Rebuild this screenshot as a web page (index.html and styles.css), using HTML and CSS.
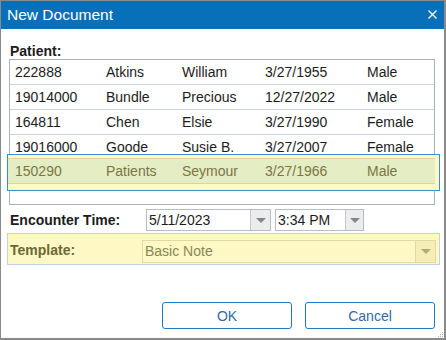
FILE: index.html
```html
<!DOCTYPE html>
<html lang="en">
<head>
  <meta charset="UTF-8" />
  <meta name="viewport" content="width=device-width, initial-scale=1.0" />
  <title>New Document</title>
  <link rel="stylesheet" href="styles.css">
</head>
<body>
  <div class="dialog">
    <div class="titlebar">
      <span class="title">New Document</span>
      <svg class="close" width="9" height="9" viewBox="0 0 9 9">
        <path d="M0.5 0.5 L8.5 8.5 M8.5 0.5 L0.5 8.5" stroke="#fff" stroke-width="1.3" fill="none" />
      </svg>
    </div>

    <div class="content">
      <div class="label patient-label">Patient:</div>
      <div class="patients">
        <div class="row"><span>222888</span><span>Atkins</span><span>William</span><span>3/27/1955</span><span>Male</span></div>
        <div class="row"><span>19014000</span><span>Bundle</span><span>Precious</span><span>12/27/2022</span><span>Male</span></div>
        <div class="row"><span>164811</span><span>Chen</span><span>Elsie</span><span>3/27/1990</span><span>Female</span></div>
        <div class="row"><span>19016000</span><span>Goode</span><span>Susie B.</span><span>3/27/2007</span><span>Female</span></div>
        <div class="spotlight">
          <div class="row selected"><span>150290</span><span>Patients</span><span>Seymour</span><span>3/27/1966</span><span>Male</span></div>
        </div>
      </div>

      <div class="field-row encounter">
        <div class="label">Encounter Time:</div>
        <div class="picker date">
          <span class="value">5/11/2023</span>
          <span class="arrow"><i></i></span>
        </div>
        <div class="picker time">
          <span class="value">3:34 PM</span>
          <span class="arrow"><i></i></span>
        </div>
      </div>

      <div class="field-row template">
        <div class="label">Template:</div>
        <div class="picker select">
          <span class="value">Basic Note</span>
          <span class="arrow"><i></i></span>
        </div>
      </div>

      <div class="actions">
        <button>OK</button>
        <button>Cancel</button>
      </div>
    </div>

    <svg class="grip" width="5" height="5" viewBox="0 0 5 5">
      <rect x="4" y="0" width="1" height="1" fill="#b5b5b5" />
      <rect x="2" y="2" width="1" height="1" fill="#b5b5b5" />
      <rect x="4" y="2" width="1" height="1" fill="#b5b5b5" />
      <rect x="0" y="4" width="1" height="1" fill="#b5b5b5" />
      <rect x="2" y="4" width="1" height="1" fill="#b5b5b5" />
      <rect x="4" y="4" width="1" height="1" fill="#b5b5b5" />
    </svg>
  </div>
</body>
</html>
```

FILE: styles.css
```css
* {
  box-sizing: border-box;
}
body {
  margin: 0;
  font-family: 'Liberation Sans', Arial, sans-serif;
  font-size: 14px;
  color: #1c1c1c;
  background: #fff;
}
.dialog {
  position: relative;
  width: 446px;
  height: 340px;
  border-style: solid;
  border-color: #8a8a8a;
  border-width: 1px 2px 2px 1px;
  background: #fff;
}
.titlebar {
  height: 28px;
  background: #0870b8;
  color: #fff;
  display: flex;
  align-items: center;
  justify-content: space-between;
  padding: 0 7px 0 6px;
}
.title {
  font-size: 15.5px;
  line-height: 28px;
}
.close {
  display: block;
  margin-top: -1px;
}
.content {
  padding: 15px 9px 0 8px;
}
.label {
  font-weight: bold;
  line-height: 15px;
  padding-left: 1px;
}
.patients {
  height: 146px;
  border: 1px solid #aab3c1;
}
.row {
  display: grid;
  grid-template-columns: 91px 76px 83px 102px 1fr;
  align-items: center;
  height: 25px;
  padding-left: 5px;
  border-bottom: 1px solid #cdd3db;
}
.spotlight {
  margin: -6px -6px -6px -3px;
  padding: 3px 4px 6px 0;
  background: #fdf8c4;
  border: 1px solid #3c8dd2;
}
.row.selected {
  height: 26px;
  padding-left: 7px;
  background: #e5edc4;
  color: #7a7543;
  border-top: 1px solid #ddd49c;
  border-bottom: 1px solid #ddd49c;
}
.field-row {
  display: grid;
  align-items: center;
}
.encounter {
  grid-template-columns: 133px 125px 89px;
  column-gap: 4px;
  margin-top: 4px;
}
.picker {
  display: flex;
  height: 22px;
  border: 1px solid #b7bdc7;
  background: #fff;
}
.picker .value {
  flex: 1;
  padding-left: 2px;
  line-height: 20px;
}
.picker .arrow {
  width: 20px;
  border-left: 1px solid #c3c8cf;
  background: #ececec;
  display: flex;
  align-items: center;
  justify-content: center;
}
.picker .arrow i {
  width: 0;
  height: 0;
  border-left: 5px solid transparent;
  border-right: 5px solid transparent;
  border-top: 5px solid #868686;
}
.time .arrow {
  width: 18px;
}
.template {
  grid-template-columns: 132px 294px;
  align-items: start;
  margin: 2px -5px 0 -2px;
  padding: 6px 3px 1px 2px;
  background: #fdf8c4;
  border: 1px solid #bcd3e8;
}
.template .label {
  color: #6c6836;
  padding: 3px 0 0 0;
}
.select {
  height: 23px;
  background: #fdf8c4;
  border-color: #e2d9a2;
  color: #8a8657;
}
.select .value {
  line-height: 21px;
}
.select .arrow {
  background: #f4eeb6;
  border-left-color: #e2d9a2;
}
.select .arrow i {
  border-top-color: #b0aa74;
}
.actions {
  display: flex;
  justify-content: flex-end;
  gap: 13px;
  margin-top: 37px;
}
.actions button {
  width: 130px;
  height: 27px;
  background: #fff;
  border: 1px solid #1f78c1;
  border-radius: 3px;
  color: #2c6cab;
  font-family: 'Liberation Sans', Arial, sans-serif;
  font-size: 14px;
  cursor: pointer;
}
.grip {
  position: absolute;
  right: 1px;
  bottom: 1px;
}
```
